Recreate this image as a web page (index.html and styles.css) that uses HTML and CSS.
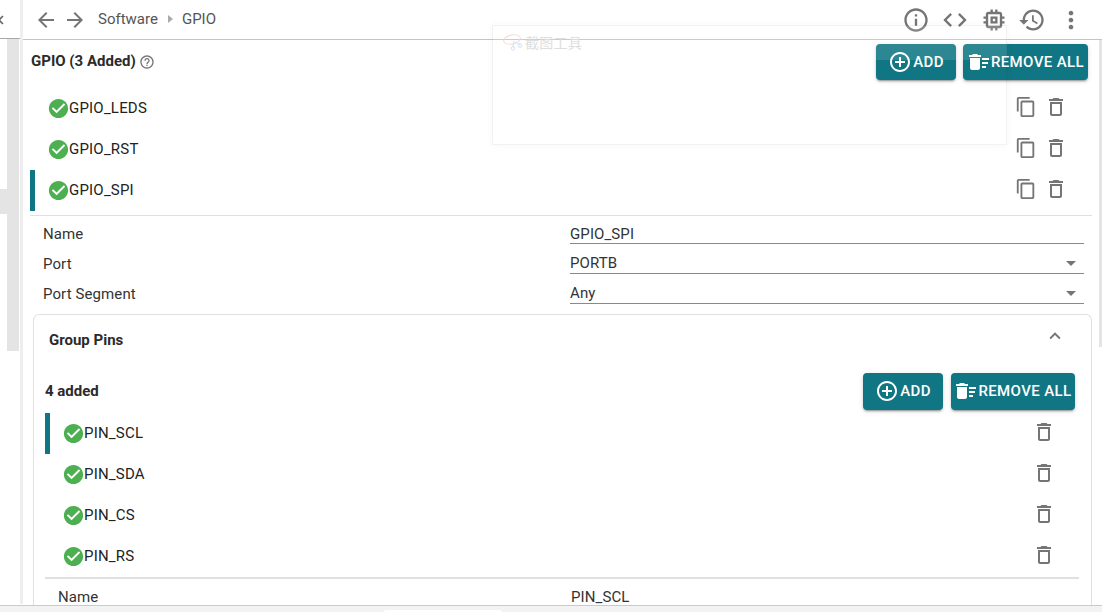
FILE: index.html
```html
<!DOCTYPE html>
<html lang="en">
<head>
    <meta charset="UTF-8">
    <meta name="viewport" content="width=device-width, initial-scale=1.0">
    <title>GPIO</title>
    <link rel="stylesheet" href="styles.css">
</head>
<body>
    <svg class="defs" width="0" height="0">
        <symbol id="i-back" viewBox="0 0 24 24"><path d="M20 11H7.83l5.59-5.59L12 4l-8 8 8 8 1.41-1.41L7.83 13H20v-2z"/></symbol>
        <symbol id="i-forward" viewBox="0 0 24 24"><path d="M12 4l-1.41 1.41L16.17 11H4v2h12.17l-5.58 5.59L12 20l8-8z"/></symbol>
        <symbol id="i-info" viewBox="0 0 24 24"><path d="M11 7h2v2h-2zm0 4h2v6h-2zm1-9C6.48 2 2 6.48 2 12s4.48 10 10 10 10-4.48 10-10S17.52 2 12 2zm0 18c-4.41 0-8-3.59-8-8s3.59-8 8-8 8 3.59 8 8-3.59 8-8 8z"/></symbol>
        <symbol id="i-code" viewBox="0 0 24 24"><path d="M9.4 16.6L4.8 12l4.6-4.6L8 6l-6 6 6 6 1.4-1.4zm5.2 0l4.6-4.6-4.6-4.6L16 6l6 6-6 6-1.4-1.4z"/></symbol>
        <symbol id="i-chip" viewBox="0 0 24 24"><path d="M15 9H9v6h6V9zm-2 4h-2v-2h2v2zm8-2V9h-2V7c0-1.1-.9-2-2-2h-2V3h-2v2h-2V3H9v2H7c-1.1 0-2 .9-2 2v2H3v2h2v2H3v2h2v2c0 1.1.9 2 2 2h2v2h2v-2h2v2h2v-2h2c1.1 0 2-.9 2-2v-2h2v-2h-2v-2h2zm-4 6H7V7h10v10z"/></symbol>
        <symbol id="i-history" viewBox="0 0 24 24"><path d="M13 3c-4.97 0-9 4.03-9 9H1l3.89 3.89.07.14L9 12H6c0-3.87 3.13-7 7-7s7 3.13 7 7-3.13 7-7 7c-1.93 0-3.68-.79-4.94-2.06l-1.42 1.42C8.27 19.99 10.51 21 13 21c4.97 0 9-4.03 9-9s-4.03-9-9-9zm-1 5v5l4.28 2.54.72-1.21-3.5-2.08V8H12z"/></symbol>
        <symbol id="i-more" viewBox="0 0 24 24"><path d="M12 8c1.1 0 2-.9 2-2s-.9-2-2-2-2 .9-2 2 .9 2 2 2zm0 2c-1.1 0-2 .9-2 2s.9 2 2 2 2-.9 2-2-.9-2-2-2zm0 6c-1.1 0-2 .9-2 2s.9 2 2 2 2-.9 2-2-.9-2-2-2z"/></symbol>
        <symbol id="i-check" viewBox="0 0 24 24"><path d="M12 2C6.48 2 2 6.48 2 12s4.48 10 10 10 10-4.48 10-10S17.52 2 12 2zm-2 15l-5-5 1.41-1.41L10 14.17l7.59-7.59L19 8l-9 9z"/></symbol>
        <symbol id="i-copy" viewBox="0 0 24 24"><path d="M16 1H4c-1.1 0-2 .9-2 2v14h2V3h12V1zm3 4H8c-1.1 0-2 .9-2 2v14c0 1.1.9 2 2 2h11c1.1 0 2-.9 2-2V7c0-1.1-.9-2-2-2zm0 16H8V7h11v14z"/></symbol>
        <symbol id="i-trash" viewBox="0 0 24 24"><path d="M6 19c0 1.1.9 2 2 2h8c1.1 0 2-.9 2-2V7H6v12zM8 9h8v10H8V9zm7.5-5l-1-1h-5l-1 1H5v2h14V4h-3.5z"/></symbol>
        <symbol id="i-add" viewBox="0 0 24 24"><path d="M13 7h-2v4H7v2h4v4h2v-4h4v-2h-4V7zm-1-5C6.48 2 2 6.48 2 12s4.48 10 10 10 10-4.48 10-10S17.52 2 12 2zm0 18c-4.41 0-8-3.59-8-8s3.59-8 8-8 8 3.59 8 8-3.59 8-8 8z"/></symbol>
        <symbol id="i-sweep" viewBox="0 0 24 24"><path d="M15 16h4v2h-4zm0-8h7v2h-7zm0 4h6v2h-6zM3 18c0 1.1.9 2 2 2h6c1.1 0 2-.9 2-2V8H3v10zM14 5h-3l-1-1H6L5 5H2v2h12z"/></symbol>
        <symbol id="i-help" viewBox="0 0 24 24"><path d="M11 18h2v-2h-2v2zm1-16C6.48 2 2 6.48 2 12s4.48 10 10 10 10-4.48 10-10S17.52 2 12 2zm0 18c-4.41 0-8-3.59-8-8s3.59-8 8-8 8 3.59 8 8-3.59 8-8 8zm0-14c-2.21 0-4 1.79-4 4h2c0-1.1.9-2 2-2s2 .9 2 2c0 2-3 1.75-3 5h2c0-2.25 3-2.5 3-5 0-2.21-1.79-4-4-4z"/></symbol>
        <symbol id="i-less" viewBox="0 0 24 24"><path d="M12 8l-6 6 1.41 1.41L12 10.83l4.59 4.58L18 14z"/></symbol>
    </svg>

    <div class="panes">
        <aside class="side">
            <div class="side-head">
                <svg class="side-close" viewBox="0 0 10 10"><path d="M1 1l8 8M9 1l-8 8"/></svg>
            </div>
            <div class="side-body">
                <div class="side-list"><div class="side-current"></div></div>
                <div class="side-scroll"></div>
            </div>
        </aside>
        <div class="splitter"></div>

        <main class="main">
            <header class="topbar">
                <svg class="icon nav-icon"><use href="#i-back"/></svg>
                <svg class="icon nav-icon"><use href="#i-forward"/></svg>
                <nav class="crumbs">
                    <span>Software</span>
                    <span class="crumb-arrow"></span>
                    <span>GPIO</span>
                </nav>
                <div class="tools">
                    <svg class="icon tool-icon"><use href="#i-info"/></svg>
                    <svg class="icon tool-icon"><use href="#i-code"/></svg>
                    <svg class="icon tool-icon"><use href="#i-chip"/></svg>
                    <svg class="icon tool-icon"><use href="#i-history"/></svg>
                    <svg class="icon tool-icon"><use href="#i-more"/></svg>
                </div>
            </header>

            <div class="body">
                <div class="content">
                    <div class="section-head">
                        <div class="section-title">GPIO (3 Added) <svg class="icon help-icon"><use href="#i-help"/></svg></div>
                        <div class="actions">
                            <button class="btn btn-add"><svg class="icon"><use href="#i-add"/></svg>ADD</button>
                            <button class="btn btn-remove"><svg class="icon"><use href="#i-sweep"/></svg>REMOVE ALL</button>
                        </div>
                    </div>

                    <div class="item">
                        <svg class="icon check"><use href="#i-check"/></svg>
                        <span class="item-name">GPIO_LEDS</span>
                        <svg class="icon row-icon copy"><use href="#i-copy"/></svg>
                        <svg class="icon row-icon"><use href="#i-trash"/></svg>
                    </div>
                    <div class="item">
                        <svg class="icon check"><use href="#i-check"/></svg>
                        <span class="item-name">GPIO_RST</span>
                        <svg class="icon row-icon copy"><use href="#i-copy"/></svg>
                        <svg class="icon row-icon"><use href="#i-trash"/></svg>
                    </div>
                    <div class="item selected">
                        <svg class="icon check"><use href="#i-check"/></svg>
                        <span class="item-name">GPIO_SPI</span>
                        <svg class="icon row-icon copy"><use href="#i-copy"/></svg>
                        <svg class="icon row-icon"><use href="#i-trash"/></svg>
                    </div>

                    <div class="fields">
                        <div class="field">
                            <label>Name</label>
                            <div class="value">GPIO_SPI</div>
                        </div>
                        <div class="field">
                            <label>Port</label>
                            <div class="value select">PORTB</div>
                        </div>
                        <div class="field">
                            <label>Port Segment</label>
                            <div class="value select">Any</div>
                        </div>
                    </div>

                    <section class="card">
                        <div class="card-head">
                            <span class="card-title">Group Pins</span>
                            <svg class="icon less-icon"><use href="#i-less"/></svg>
                        </div>
                        <div class="pins">
                            <div class="pins-head">
                                <span class="pins-count">4 added</span>
                                <div class="actions">
                                    <button class="btn btn-add"><svg class="icon"><use href="#i-add"/></svg>ADD</button>
                                    <button class="btn btn-remove"><svg class="icon"><use href="#i-sweep"/></svg>REMOVE ALL</button>
                                </div>
                            </div>
                            <div class="item pin selected">
                                <svg class="icon check"><use href="#i-check"/></svg>
                                <span class="item-name">PIN_SCL</span>
                                <svg class="icon row-icon"><use href="#i-trash"/></svg>
                            </div>
                            <div class="item pin">
                                <svg class="icon check"><use href="#i-check"/></svg>
                                <span class="item-name">PIN_SDA</span>
                                <svg class="icon row-icon"><use href="#i-trash"/></svg>
                            </div>
                            <div class="item pin">
                                <svg class="icon check"><use href="#i-check"/></svg>
                                <span class="item-name">PIN_CS</span>
                                <svg class="icon row-icon"><use href="#i-trash"/></svg>
                            </div>
                            <div class="item pin">
                                <svg class="icon check"><use href="#i-check"/></svg>
                                <span class="item-name">PIN_RS</span>
                                <svg class="icon row-icon"><use href="#i-trash"/></svg>
                            </div>
                            <div class="pin-fields">
                                <label>Name</label>
                                <div class="pin-value">PIN_SCL</div>
                            </div>
                        </div>
                    </section>
                </div>
                <div class="page-scroll"><div class="page-thumb"></div></div>
            </div>
        </main>
    </div>

    <footer class="bottom"><div class="bottom-tab"></div></footer>

    <!-- screenshot tool window lying over the page -->
    <div class="shot-tool">
        <svg class="shot-logo" viewBox="0 0 20 17">
            <ellipse class="logo-red" cx="9" cy="5.5" rx="8.5" ry="4.5" transform="rotate(-12 9 5.5)"/>
            <path class="logo-blue" d="M11 7l-1 6M12 8l5 3"/>
            <circle class="logo-blue" cx="10" cy="14.5" r="1.8"/>
            <circle class="logo-blue" cx="17" cy="11.5" r="1.8"/>
        </svg>
        <span class="shot-name">截图工具</span>
    </div>
</body>
</html>
```

FILE: styles.css
```css
* {
    box-sizing: border-box;
}
html, body {
    margin: 0;
    height: 612px;
    overflow: hidden;
}
body {
    position: relative;
    font-family: Roboto, "Liberation Sans", sans-serif;
    font-size: 15px;
    color: #333;
    background: #fff;
}
.defs {
    position: absolute;
}
.icon {
    width: 24px;
    height: 24px;
    fill: #757575;
    flex: none;
}

/* page frame */
.panes {
    display: flex;
    height: 605px;
}
.side {
    width: 20px;
    display: flex;
    flex-direction: column;
}
.side-head {
    height: 39px;
    flex: none;
    display: flex;
    align-items: center;
    border-bottom: 1px solid #a8a8a8;
    overflow: hidden;
}
.side-close {
    width: 10px;
    height: 10px;
    margin-left: -6px;
    margin-top: 2px;
    fill: none;
    stroke: #666;
    stroke-width: 1.6;
    flex: none;
}
.side-body {
    display: flex;
    flex: 1;
    align-items: flex-start;
}
.side-list {
    width: 7px;
    padding-top: 150px;
}
.side-current {
    height: 25px;
    background: #e4e4e4;
}
.side-scroll {
    width: 12px;
    height: 312px;
    background: #e4e4e4;
}
.splitter {
    width: 3px;
    height: 604px;
    flex: none;
    background: #eee;
}
.main {
    flex: 1;
    min-width: 0;
    display: flex;
    flex-direction: column;
}
.bottom {
    height: 7px;
    border-top: 1px solid #c8c8d6;
    background: #f3f3f3;
    overflow: hidden;
}
.bottom-tab {
    width: 118px;
    height: 6px;
    margin: 4px 0 0 384px;
    background: #fff;
    border-radius: 2px 2px 0 0;
}

/* top bar */
.topbar {
    height: 40px;
    flex: none;
    display: flex;
    align-items: center;
    padding: 0 17px 0 11px;
    border-bottom: 1px solid #c4c4c4;
}
.nav-icon + .nav-icon {
    margin-left: 5px;
}
.crumbs {
    display: flex;
    align-items: center;
    margin: 0 0 2px 11px;
    color: #555;
}
.crumb-arrow {
    width: 0;
    height: 0;
    margin: 1px 9px 0 10px;
    border-left: 5px solid #aaa;
    border-top: 4px solid transparent;
    border-bottom: 4px solid transparent;
}
.tools {
    margin-left: auto;
    display: flex;
    align-items: center;
    gap: 10.75px;
}
.tool-icon {
    width: 28px;
    height: 28px;
}

/* scrolling area */
.body {
    flex: 1;
    min-height: 0;
    display: flex;
}
.content {
    flex: 1;
    min-width: 0;
    padding: 4px 7px 0;
    overflow: hidden;
}
.page-scroll {
    width: 3px;
    flex: none;
}
.page-thumb {
    height: 307px;
    background: #e4e4e4;
}
.section-head {
    display: flex;
    align-items: center;
    justify-content: space-between;
    height: 36px;
    margin-bottom: 8px;
    padding: 0 4px 0 0;
}
.section-title {
    display: flex;
    align-items: center;
    gap: 3px;
    margin: 0 0 2px 1px;
    font-weight: 700;
    color: #2b2b2b;
}
.help-icon {
    width: 16px;
    height: 16px;
    margin-top: 2px;
}
.actions {
    display: flex;
    gap: 7px;
}
.btn {
    height: 36px;
    display: flex;
    align-items: center;
    justify-content: center;
    gap: 1px;
    padding: 0;
    border: 0;
    border-radius: 4px;
    background: #107684;
    color: #fff;
    font-family: Roboto, "Liberation Sans", sans-serif;
    font-size: 15px;
    font-weight: 500;
    letter-spacing: .4px;
    box-shadow: 0 3px 1px -2px rgba(0,0,0,.2), 0 2px 2px 0 rgba(0,0,0,.14), 0 1px 5px 0 rgba(0,0,0,.12);
}
.btn .icon {
    fill: #fff;
}
.btn-add {
    width: 80px;
}
.btn-remove {
    width: 125px;
    gap: 0;
}

/* list rows */
.item {
    height: 41px;
    display: flex;
    align-items: center;
    padding-left: 17px;
    padding-right: 24px;
    color: #222;
    border-left: 5px solid transparent;
}
.item.selected {
    border-left-color: #107684;
}
.check {
    width: 23px;
    height: 23px;
    fill: #4caf50;
    margin-left: -5px;
    margin-right: -1px;
}
.item-name {
    flex: 1;
    margin-bottom: 2px;
    letter-spacing: .2px;
}
.row-icon {
    margin: 0 0 4px 7px;
}
.row-icon.copy {
    width: 22px;
    height: 22px;
}

/* form */
.fields {
    margin-top: 4px;
    padding: 0 8px 0 13px;
    border-top: 1px solid #e0e0e0;
    letter-spacing: .1px;
}
.field {
    display: grid;
    grid-template-columns: 527px 1fr;
    height: 30px;
    align-items: end;
}
.field:first-child {
    height: 28px;
}
.field:first-child .value {
    line-height: 24px;
}
.field label {
    padding-bottom: 1px;
}
.value {
    position: relative;
    height: 22px;
    line-height: 22px;
    border-bottom: 1px solid #8a8a8a;
}
.select::after {
    content: "";
    position: absolute;
    right: 8px;
    top: 9px;
    border-top: 5px solid #757575;
    border-left: 5px solid transparent;
    border-right: 5px solid transparent;
}
.card {
    margin: 10px 0 0 3px;
    border: 1px solid #e0e0e0;
    border-bottom: 0;
    border-radius: 6px 6px 0 0;
}
.card-head {
    height: 50px;
    display: flex;
    align-items: flex-start;
    justify-content: space-between;
    padding: 0 25px 0 15px;
}
.card-title {
    margin-top: 16px;
    font-weight: 700;
    color: #2b2b2b;
}
.less-icon {
    width: 22px;
    height: 22px;
    margin-top: 10px;
}
.pins {
    margin: 0 12px 0 11px;
}
.pins-head {
    display: flex;
    align-items: center;
    justify-content: space-between;
    height: 37px;
    margin: 8px 0 3px;
    padding-right: 4px;
}
.pins-head .actions {
    gap: 8px;
}
.pins-head .btn {
    height: 37px;
    padding-bottom: 1px;
}
.pins-head .btn-remove {
    width: 124px;
}
.pins-count {
    margin-bottom: 2px;
    font-weight: 700;
    color: #2b2b2b;
}
.pin {
    padding-left: 19px;
    padding-right: 23px;
}
.pin .check {
    margin-left: -7px;
}
.pin-fields {
    display: grid;
    grid-template-columns: 513px 1fr;
    padding: 9px 0 0 13px;
    border-top: 2px solid #e0e0e0;
    letter-spacing: .1px;
}

/* screenshot tool ghost */
.shot-tool {
    position: absolute;
    left: 492px;
    top: 25px;
    width: 515px;
    height: 120px;
    padding: 8px 0 0 10px;
    display: flex;
    align-items: flex-start;
    gap: 2px;
    border: 1px solid rgba(0,0,0,.05);
    background: linear-gradient(rgba(255,255,255,.12) 0 34px, rgba(255,255,255,0) 34px);
    box-shadow: 0 0 8px rgba(0,0,0,.04);
}
.shot-logo {
    width: 20px;
    height: 17px;
    flex: none;
    fill: none;
    stroke-width: 1;
}
.logo-red {
    stroke: #f6d9d9;
}
.logo-blue {
    stroke: #cfe3f3;
}
.shot-name {
    font-family: "Noto Sans CJK SC", "Noto Sans CJK JP", sans-serif;
    font-size: 14px;
    line-height: 17px;
    letter-spacing: .3px;
    color: #dedede;
}
```
